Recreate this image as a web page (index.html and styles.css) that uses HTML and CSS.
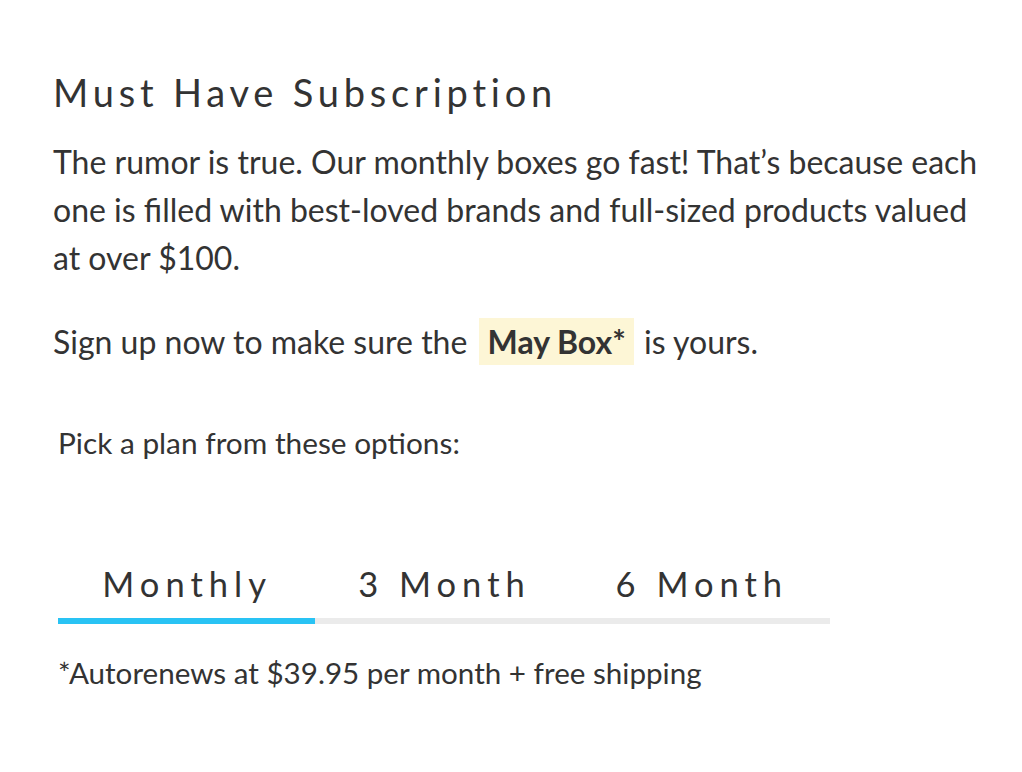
FILE: index.html
```html
<!DOCTYPE html>
<html lang="en">
<head>
  <meta charset="UTF-8">
  <title>Must Have Subscription</title>
  <link rel="stylesheet" href="styles.css">
</head>
<body>
  <div class="container">
    <h2>Must Have Subscription</h2>
    <p class="intro">The rumor is true. Our monthly boxes go fast! That’s because each one is filled with best-loved brands and full-sized products valued at over $100.</p>
    <p class="signup">Sign up now to make sure the <span class="highlight">May Box*</span> is yours.</p>

    <div class="plans">
      <p class="pick">Pick a plan from these options:</p>
      <div class="tabs">
        <div class="tab active">Monthly</div>
        <div class="tab">3 Month</div>
        <div class="tab">6 Month</div>
      </div>
      <p class="note">*Autorenews at $39.95 per month + free shipping</p>
    </div>
  </div>
</body>
</html>
```

FILE: styles.css
```css
body {
  font-family: Lato, "Open Sans", sans-serif;
  color: #333;
  background-color: #fff;
  margin: 0;
}
.container {
  padding: 62px 30px 0 53px;
}
h2 {
  margin: 0;
  font-size: 38px;
  font-weight: 400;
  letter-spacing: 4.8px;
  line-height: 60px;
}
.intro {
  margin: 16px 0 0;
  font-size: 32px;
  line-height: 48px;
}
.signup {
  margin: 36px 0 0;
  font-size: 32px;
  line-height: 48px;
}
.highlight {
  display: inline-block;
  background-color: #fdf6d6;
  font-weight: 700;
  line-height: 47px;
  padding: 0 8px 0 9px;
  margin: 0 2px 0 3px;
}
.plans {
  padding-left: 5px;
}
.pick {
  margin: 57px 0 0;
  font-size: 29.8px;
  line-height: 40px;
}
.tabs {
  display: flex;
  width: 772px;
  margin-top: 96px;
  border-bottom: 6px solid #ebebeb;
}
.tab {
  flex: 1;
  text-align: center;
  font-size: 34.5px;
  letter-spacing: 6px;
  line-height: 50px;
  padding: 0 0 9px 1px;
  margin-bottom: -6px;
  border-bottom: 6px solid transparent;
}
.tab.active {
  border-bottom-color: #29c3f4;
}
.note {
  margin: 29px 0 0;
  font-size: 29.6px;
  line-height: 40px;
}
```
